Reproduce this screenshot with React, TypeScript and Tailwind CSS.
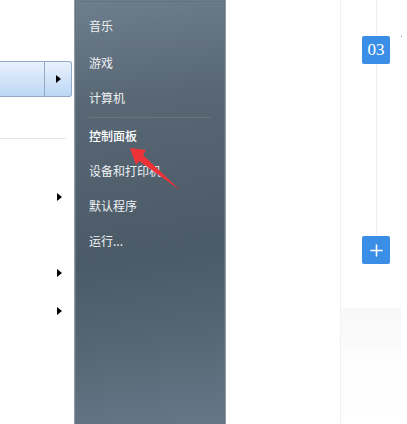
import { Plus } from "lucide-react";

const cjk = { fontFamily: '"Noto Sans CJK SC", "Liberation Sans", sans-serif' };

function MenuArrow() {
  return <div className="w-0 h-0 border-y-[4px] border-y-transparent border-l-[5px] border-l-black" />;
}

function Item({ label, bold }: { label: string; bold?: boolean }) {
  return (
    <div className={"h-[35px] flex items-center text-[12px] text-[#eef1f4] " + (bold ? "font-medium text-white" : "")}>
      {label}
    </div>
  );
}

function Sep() {
  return <div className="h-px mr-[10px] bg-[#66747f]" />;
}

export default function App() {
  return (
    <div className="relative w-[407px] h-[424px] overflow-hidden bg-white flex" style={cjk}>
      {/* left list */}
      <div className="w-[74px] shrink-0 flex flex-col">
        <div className="h-[61px]" />
        <div className="mr-[2px] h-[36px] flex rounded-r-[3px] border border-l-0 border-[#8fa9c6] bg-gradient-to-b from-[#e9f2fc] to-[#bcd6f5]">
          <div className="flex-1 border-r border-[#94a9c2]" />
          <div className="w-[26px] flex items-center justify-center">
            <MenuArrow />
          </div>
        </div>
        <div className="h-[41px]" />
        <div className="h-px mr-[8px] bg-[#e3e6e9]" />
        <div className="h-[54px]" />
        <div className="h-[8px] flex justify-end pr-[12px]"><MenuArrow /></div>
        <div className="h-[68px]" />
        <div className="h-[8px] flex justify-end pr-[12px]"><MenuArrow /></div>
        <div className="h-[30px]" />
        <div className="h-[8px] flex justify-end pr-[12px]"><MenuArrow /></div>
      </div>

      {/* start menu right pane */}
      <div className="w-[152px] shrink-0 border-x border-[#8e9aa5] outline outline-1 outline-offset-[-2px] outline-[#66727e] pl-[14px] pr-[4px] pt-[8px] bg-[linear-gradient(172deg,#6d7e8e_0%,#586773_24%,#4b5a67_60%,#566573_78%,#667788_100%)]">
        <Item label="音乐" />
        <div className="h-[1px]" />
        <Sep />
        <Item label="游戏" />
        <Item label="计算机" />
        <div className="h-[2px]" />
        <Sep />
        <Item label="控制面板" bold />
        <Item label="设备和打印机" />
        <Item label="默认程序" />
        <Item label="运行..." />
      </div>

      {/* blank page area */}
      <div className="w-[115px] shrink-0 border-r border-[#f1f1f1]" />

      {/* timeline */}
      <div className="flex-1 flex flex-col">
        <div className="relative h-[308px] flex flex-col items-start pl-[21px]">
          <div className="absolute left-[35px] top-0 h-[236px] w-px bg-[#eeeeee]" />
          <div className="absolute left-[60px] top-[36px] w-px h-px bg-[#5f8f84]" />
          <div className="h-[36px]" />
          <div className="relative w-[28px] h-[28px] rounded-[2px] bg-[#3a8ee6] text-white text-[17px] flex items-center justify-center" style={{ fontFamily: '"Liberation Serif", serif' }}>
            03
          </div>
          <div className="h-[172px]" />
          <div className="relative w-[28px] h-[28px] rounded-[2px] bg-[#3a8ee6] text-white flex items-center justify-center">
            <Plus size={19} strokeWidth={2} />
          </div>
        </div>
        <div className="w-[60px] h-[42px] bg-gradient-to-b from-[#f8f8f8] to-[#fbfbfb]" />
        <div className="w-[60px] flex-1 bg-gradient-to-b from-[#fdfdfd] to-white" />
      </div>

      {/* red annotation arrow */}
      <svg className="absolute left-0 top-0 pointer-events-none" width="407" height="424" viewBox="0 0 407 424">
        <path d="M130 148 L146 150 L143 155 L180 190 L139 161 L136 165 Z" fill="#ee3338" />
      </svg>
    </div>
  );
}
